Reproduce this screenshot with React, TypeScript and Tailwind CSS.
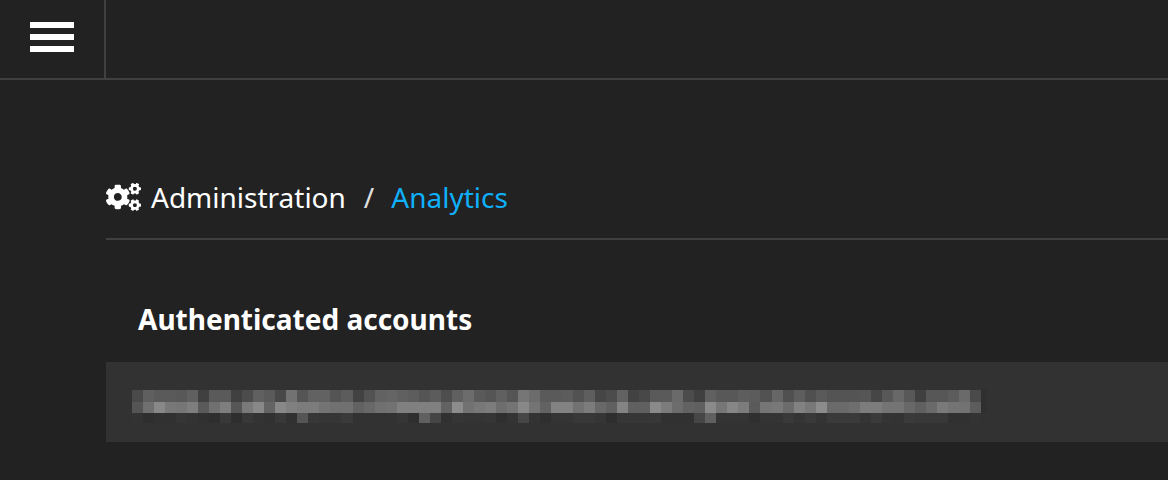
import React from "react";
import { FaCogs } from "react-icons/fa";

const MOSAIC_ROWS = [
  {
    y: 0,
    height: 12,
    shades:
      "4a5f5a5a5860405a5a404c605a4872556262545c42526265605d555c4e606c5a556055766c5a5a5c525e464c6242485a5a6a4c406058585e5c5266505e505a545454564658685840" +
      "57575c6a4a",
  },
  {
    y: 12,
    height: 11,
    shades:
      "55708878767e5a707e567a886488807c7c747070626870728080808062" +
      "8c72787c6e7488746282" +
      "82727c6860846060" +
      "8a7c6c62608a76867c5a7678" +
      "6c82788c6a6a6e7c7c747468606a7a74725c",
  },
  {
    y: 23,
    height: 10,
    shades:
      "332e31313533302e382e383331383155373535" +
      "3a32323232352f60453135343435" +
      "2f3446332f34" +
      "343838352e3636363731313146603434342f3434" +
      "39343934" +
      "3a3a3a343a34333a383838303033",
  },
];

const CELL = 11;

function RedactedText() {
  return (
    <svg
      role="img"
      aria-label="Redacted"
      viewBox="0 0 855 33"
      className="block h-[33px] w-[855px] shrink-0"
      shapeRendering="crispEdges"
    >
      {MOSAIC_ROWS.map((row) =>
        (row.shades.match(/../g) ?? []).map((shade, i) => {
          const x = Math.round((i * 849) / 77);
          return (
            <rect
              key={`${row.y}-${i}`}
              x={x}
              y={row.y}
              width={Math.min(CELL + 1, 849 - x)}
              height={row.height}
              fill={`#${shade}${shade}${shade}`}
            />
          );
        }),
      )}
      <rect x="849" y="0" width="6" height="23" fill="#2f2f2f" />
    </svg>
  );
}

function TopBar() {
  return (
    <header className="flex h-20 border-b-2 border-[#404040]">
      <button
        type="button"
        aria-label="Menu"
        className="flex w-[106px] flex-col gap-1.5 border-r-2 border-[#404040] pt-[22px] pl-[30px]"
      >
        <span className="h-1.5 w-11 bg-white" />
        <span className="h-1.5 w-11 bg-white" />
        <span className="h-1.5 w-11 bg-white" />
      </button>
    </header>
  );
}

export default function App() {
  return (
    <div className="min-h-screen overflow-x-hidden bg-[#222222] font-['Noto_Sans',sans-serif] text-[28px] leading-10 text-white">
      <TopBar />
      <main className="pt-[97px] pb-[38px] pl-[106px]">
        <nav aria-label="Breadcrumb" className="border-b-2 border-[#404040] pb-[21px]">
          <ol className="flex items-center">
            <li>
              <a href="#administration" className="flex items-center gap-2.5">
                <FaCogs className="h-7 w-[35px]" aria-hidden="true" />
                Administration
              </a>
            </li>
            <li aria-hidden="true" className="pr-[17px] pl-[18px] text-[#e0e0e0]">
              /
            </li>
            <li>
              <a href="#analytics" aria-current="page" className="text-[#0fb0fb]">
                Analytics
              </a>
            </li>
          </ol>
        </nav>
        <section>
          <h2 className="pt-[59px] pb-[23px] pl-8 font-bold">Authenticated accounts</h2>
          <div className="flex h-20 items-center overflow-hidden bg-[#323232] pt-2 pl-[26px]">
            <RedactedText />
          </div>
        </section>
      </main>
    </div>
  );
}
